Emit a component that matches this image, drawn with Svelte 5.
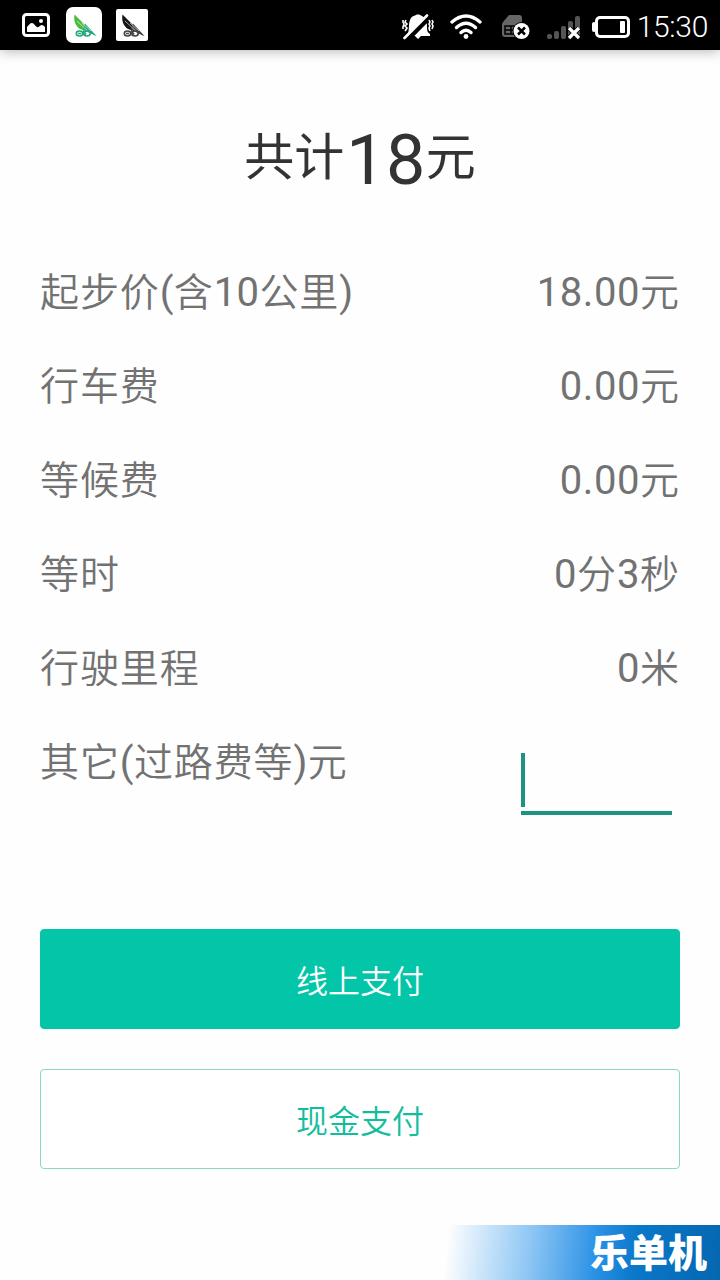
<script lang="ts">
  type Fee = { label: string; value: string };

  const fees: Fee[] = [
    { label: "起步价(含10公里)", value: "18.00元" },
    { label: "行车费", value: "0.00元" },
    { label: "等候费", value: "0.00元" },
    { label: "等时", value: "0分3秒" },
    { label: "行驶里程", value: "0米" },
  ];

  let total = 18;
  let other = "";

  // odd parts are the latin runs
  const split = (text: string) => text.split(/([\d.()]+)/);
</script>

{#snippet wing(color: string, tip: string)}
  <path fill={color} d="M3.500 1.500C2.500 7 4 12 8 15.500L17 19L25 23Z" />
  <path fill={tip} d="M14 10.500L25.500 23L19 20L12 16Z" />
  <path stroke="#fff" stroke-width=".6" fill="none" d="M6 8L19 20M11 10L20 18" />
  <g fill="none" stroke={tip} stroke-width="1.600">
    <ellipse cx="8.500" cy="20.500" rx="3.200" ry="2.500" />
    <ellipse cx="16" cy="20.500" rx="3.200" ry="2.500" />
    <path d="M7 20.500H10M12 17.500L15 21.500" />
  </g>
{/snippet}

{#snippet mixed(text: string)}
  {#each split(text) as part, i}{#if i % 2}<span class="latin">{part}</span>{:else}{part}{/if}{/each}
{/snippet}

<div class="screen">
  <header class="status">
    <div class="notices">
      <svg class="picture" width="28" height="24" viewBox="0 0 28 24">
        <rect x="1.500" y="1.500" width="25" height="21" rx="3" fill="none" stroke="#fff" stroke-width="3" />
        <path fill="#fff" d="M5 19V14C7 12 8 10 10 10C12 10 13 13 15 14C17 15 18 12 20 12C21 12 22 13 23 14V19Z" />
        <circle cx="19" cy="8" r="2" fill="#fff" />
      </svg>
      <span class="app"><svg width="27" height="25" viewBox="0 0 27 25">{@render wing("#4dbb3c", "#22a681")}</svg></span>
      <span class="app square"><svg width="27" height="25" viewBox="0 0 27 25">{@render wing("#161616", "#444")}</svg></span>
    </div>
    <div class="signals">
      <svg width="32" height="26" viewBox="0 0 32 26">
        <path fill="#fff" d="M5 21C8 17 6 11 8 6C9 3 11 2 13 1.500C14 0 18 0 19 1.500C23 3 25 8 25 12C25 16 25 18 28 20V22H5ZM13 22H19L16 25Z" />
        <path stroke="#000" stroke-width="5.500" d="M5 25.500L28 2" />
        <path stroke="#fff" stroke-width="2.600" stroke-linecap="round" d="M2.500 24L25 1.500" />
        <path fill="none" stroke="#fff" stroke-width="1.600" d="M4 6L3 8L5 10L3 12L5 14L3 17M1 6v2l1 2l-1 3v2M27 6l1 2l-1 2l1 2l-1 2l1 3M30 6l1 2l-1 2l1 2l-1 3" />
      </svg>
      <svg width="32" height="26" viewBox="0 0 32 26">
        <g fill="none" stroke="#fff" stroke-width="3.400" stroke-linecap="round">
          <path d="M2 8Q16 -4 30 8" />
          <path d="M6.500 13.500Q16 5 25.500 13.500" />
          <path d="M11 18.500Q16 14 21 18.500" />
        </g>
        <circle cx="16" cy="22.500" r="2.400" fill="#fff" />
      </svg>
      <svg width="30" height="26" viewBox="0 0 30 26">
        <path fill="#666" d="M2 8L8 1H18Q21 1 21 4V23H4Q1 23 1 20V10Z" />
        <path fill="none" stroke="#000" stroke-width="1.500" d="M14 12H4V20H14M4 16H12M10 12V20" />
        <circle cx="20.500" cy="17" r="9" fill="#000" />
        <circle cx="20.500" cy="17" r="8" fill="#fff" />
        <path stroke="#000" stroke-width="2.500" d="M17 13.500L24 20.500M24 13.500L17 20.500" />
      </svg>
      <svg width="34" height="26" viewBox="0 0 34 26">
        <g fill="#555">
          <rect y="20" width="5" height="5" rx="2" />
          <rect x="7" y="17" width="5" height="8" rx="2" />
          <rect x="14" y="12" width="5" height="13" rx="2" />
          <rect x="21" y="7" width="5" height="18" rx="2" />
          <rect x="28" y="2" width="5" height="23" rx="2" />
        </g>
        <path stroke="#000" stroke-width="5" d="M22 14L32 24M32 14L22 24" />
        <path stroke="#fff" stroke-width="3.200" d="M22 14L32 24M32 14L22 24" />
      </svg>
      <svg width="38" height="24" viewBox="0 0 38 24">
        <rect x="4.500" y="2.500" width="32" height="19" rx="3.500" fill="none" stroke="#fff" stroke-width="3" />
        <rect y="7" width="4" height="10" rx="2" fill="#fff" />
        <rect x="28" y="6" width="5" height="12" rx="1" fill="#fff" />
      </svg>
      <time>15:30</time>
    </div>
  </header>

  <main>
    <h1><span>共计</span><strong>{total}</strong><span>元</span></h1>

    <ul>
      {#each fees as fee}
        <li>
          <span>{@render mixed(fee.label)}</span>
          <span class="value">{@render mixed(fee.value)}</span>
        </li>
      {/each}
      <li>
        <label for="other">{@render mixed("其它(过路费等)元")}</label>
        <div class="field">
          <i class="caret"></i>
          <input id="other" type="text" inputmode="decimal" bind:value={other} />
        </div>
      </li>
    </ul>

    <div class="actions">
      <button type="button" class="primary">线上支付</button>
      <button type="button">现金支付</button>
    </div>
  </main>

  <footer><span>乐单机</span></footer>
</div>

<style>
  :global(body) {
    background: #fefefe;
  }
  .screen {
    display: flex;
    flex-direction: column;
    height: 1280px;
    background: #fefefe;
    color: #727272;
    font-family: Roboto, "Noto Sans CJK SC", sans-serif;
    overflow: hidden;
  }
  .status {
    flex: none;
    box-sizing: border-box;
    height: 50px;
    padding: 0 12px 0 22px;
    display: flex;
    justify-content: space-between;
    align-items: center;
    background: #000;
    color: #fff;
    box-shadow: 0 1px 12px rgba(0, 0, 0, 0.3);
  }
  .notices,
  .signals {
    display: flex;
    align-items: center;
  }
  .notices {
    gap: 14px;
  }
  .picture {
    margin-right: 2px;
  }
  .app {
    display: flex;
    justify-content: center;
    align-items: center;
    width: 36px;
    height: 36px;
    border-radius: 7px;
    background: #fff;
  }
  .square {
    width: 32px;
    height: 32px;
    border-radius: 2px;
  }
  .signals {
    gap: 16px;
    padding-top: 3px;
  }
  .signals svg:nth-of-type(3) {
    margin: 0 1px 0 3px;
  }
  .signals svg:nth-of-type(4) {
    margin-left: -1px;
  }
  .signals svg:nth-of-type(5) {
    margin-left: -5px;
  }
  time {
    margin-left: -9px;
    font-size: 30px;
    font-weight: 300;
    line-height: 40px;
    letter-spacing: -0.3px;
  }
  main {
    flex: 1;
    padding: 66px 40px 0;
  }
  h1 {
    display: flex;
    justify-content: center;
    margin: 0;
    height: 84px;
    line-height: 84px;
    font-size: 50px;
    font-weight: 400;
    color: #333;
  }
  h1 span {
    line-height: 84px;
  }
  strong {
    margin-left: 2px;
    font-size: 70px;
    font-weight: 400;
    line-height: 89px;
    letter-spacing: 0.5px;
  }
  ul {
    margin: 43px 0 0;
    padding: 0;
    list-style: none;
  }
  li {
    display: flex;
    justify-content: space-between;
    height: 94px;
    font-size: 39px;
    font-weight: 350;
    line-height: 100px;
    letter-spacing: 0.9px;
  }
  .latin {
    font-size: 40px;
    font-weight: 400;
    letter-spacing: 0.4px;
  }
  .value .latin {
    letter-spacing: 0.6px;
  }
  .field {
    box-sizing: border-box;
    display: flex;
    align-items: flex-end;
    width: 151px;
    height: 63px;
    margin: 39px 8px 0 0;
    padding-bottom: 4px;
    border-bottom: 4px solid #1c9280;
  }
  .caret {
    flex: none;
    width: 4px;
    height: 54px;
    background: #1c9280;
  }
  input {
    min-width: 0;
    flex: 1;
    height: 54px;
    padding: 0;
    border: 0;
    outline: 0;
    background: transparent;
    font: inherit;
    color: inherit;
  }
  .actions {
    display: flex;
    flex-direction: column;
    gap: 40px;
    margin-top: 122px;
  }
  button {
    height: 100px;
    padding: 0;
    border: 1px solid #8bd5c9;
    border-radius: 4px;
    background: #fff;
    color: #12bd9e;
    font: 350 32px Roboto, "Noto Sans CJK SC", sans-serif;
  }
  .primary {
    border-color: #03c6a9;
    background: #03c6a9;
    color: #fff;
  }
  footer {
    flex: none;
    box-sizing: border-box;
    align-self: flex-end;
    width: 280px;
    height: 55px;
    padding-right: 13px;
    background: linear-gradient(96deg, #fefefe 3%, #8fc7f4 32%, #2a91e5 56%, #0a77c9 70%, #0567b0);
    color: #fff;
    text-align: right;
    font-size: 39px;
    font-weight: 900;
    line-height: 58px;
  }
</style>
